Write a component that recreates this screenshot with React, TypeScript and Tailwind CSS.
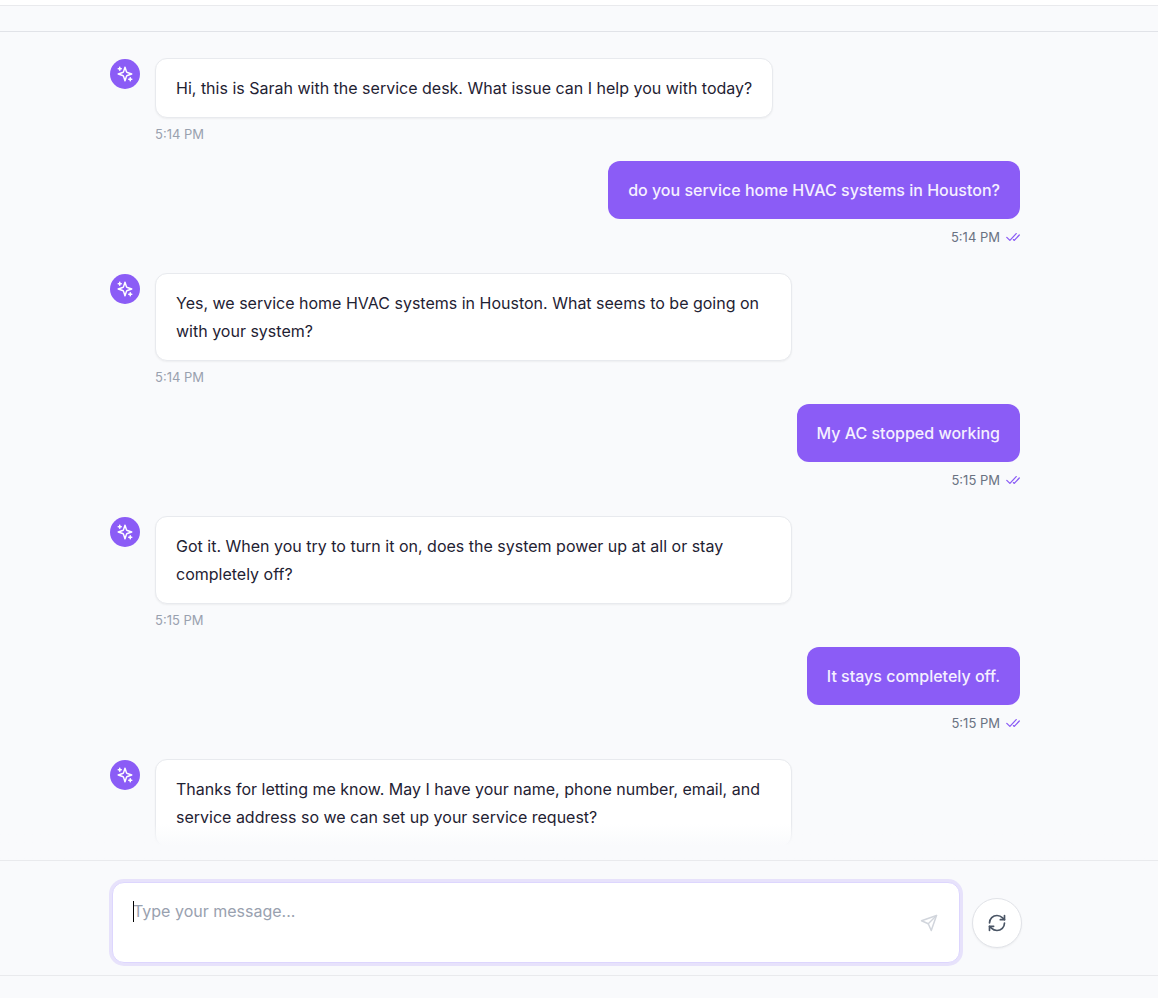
import { useState } from 'react';
import { RefreshCw } from 'lucide-react';
import clsx from 'clsx';

interface Message {
  id: number;
  from: 'agent' | 'user';
  text: string;
  time?: string;
}

const messages: Message[] = [
  { id: 1, from: 'agent', text: 'Hi, this is Sarah with the service desk. What issue can I help you with today?', time: '5:14 PM' },
  { id: 2, from: 'user', text: 'do you service home HVAC systems in Houston?', time: '5:14 PM' },
  { id: 3, from: 'agent', text: 'Yes, we service home HVAC systems in Houston. What seems to be going on with your system?', time: '5:14 PM' },
  { id: 4, from: 'user', text: 'My AC stopped working', time: '5:15 PM' },
  { id: 5, from: 'agent', text: 'Got it. When you try to turn it on, does the system power up at all or stay completely off?', time: '5:15 PM' },
  { id: 6, from: 'user', text: 'It stays completely off.', time: '5:15 PM' },
  { id: 7, from: 'agent', text: 'Thanks for letting me know. May I have your name, phone number, email, and service address so we can set up your service request?' },
];

function SparklesIcon() {
  return (
    <svg className="size-[18px]" viewBox="0 0 24 24" fill="none" stroke="currentColor" strokeWidth="2" strokeLinecap="round" strokeLinejoin="round" aria-hidden="true">
      <path d="m12 3-1.912 5.813a2 2 0 0 1-1.275 1.275L3 12l5.813 1.912a2 2 0 0 1 1.275 1.275L12 21l1.912-5.813a2 2 0 0 1 1.275-1.275L21 12l-5.813-1.912a2 2 0 0 1-1.275-1.275L12 3Z" />
      <path d="M5 3v4M3 5h4M19 17v4M17 19h4" />
    </svg>
  );
}

function ReadIcon() {
  return (
    <svg className="h-[10px] w-[14px] text-[#8b5cf6]" viewBox="0 0 14 10" fill="none" stroke="currentColor" strokeWidth="1.3" strokeLinecap="round" strokeLinejoin="round" aria-hidden="true">
      <path d="M.8 5.4 3.9 8.4 10.2 1.6" />
      <path d="M7.4 7.6 8.3 8.4 13.3 3" />
    </svg>
  );
}

function SendIcon() {
  return (
    <svg className="size-[18px]" viewBox="0 0 24 24" fill="none" stroke="currentColor" strokeWidth="2" strokeLinecap="round" strokeLinejoin="round" aria-hidden="true">
      <path d="m22 2-7 20-4-9-9-4Z" />
      <path d="M22 2 11 13" />
    </svg>
  );
}

function MessageRow({ message }: { message: Message }) {
  const { from, text, time } = message;

  if (from === 'user') {
    return (
      <div className="mb-[26px] flex flex-col items-end">
        <p className="rounded-xl bg-[#8b5cf6] px-5 py-[15px] text-base leading-7 font-medium text-[#f5f0ff]">
          {text}
        </p>
        <div className="mt-2 flex items-center gap-1.5 text-[13px] leading-5 text-gray-500">
          {time}
          <ReadIcon />
        </div>
      </div>
    );
  }

  return (
    <div className="mb-[17px] flex items-start gap-[15px]">
      <div className="mt-px flex size-[30px] shrink-0 items-center justify-center rounded-full bg-[#8b5cf6] text-white">
        <SparklesIcon />
      </div>
      <div className="max-w-[637px]">
        <p className="w-fit rounded-xl border border-[#e8eaee] bg-white px-5 py-[15px] text-base leading-7 text-[#1f2233] shadow-xs">
          {text}
        </p>
        {time && <div className="mt-1.5 text-[13px] leading-5 text-gray-400">{time}</div>}
      </div>
    </div>
  );
}

export default function App() {
  const [draft, setDraft] = useState('');

  return (
    <div className="flex h-screen flex-col overflow-hidden bg-[#f9fafc] font-['Inter',sans-serif]">
      <div className="h-1.5 shrink-0 border-b border-[#e9eaed] bg-white" />
      <div className="h-[26px] shrink-0 border-b border-[#e1e3e8]" />

      {/* Conversation */}
      <main className="relative min-h-0 flex-1 overflow-hidden pr-7">
        <div className="mx-auto max-w-[910px] pt-[26px]">
          {messages.map((message) => (
            <MessageRow key={message.id} message={message} />
          ))}
        </div>
        <div className="absolute inset-x-0 bottom-0 h-9 bg-linear-to-t from-[#f9fafc] from-40% to-transparent" />
      </main>

      {/* Composer */}
      <form
        className="shrink-0 border-t border-[#e9eaed] pt-[21px] pr-6 pb-3"
        onSubmit={(event) => event.preventDefault()}
      >
        <div className="mx-auto flex max-w-[910px] items-center gap-3">
          <div className="relative flex h-[81px] flex-1 items-center rounded-xl border border-[#ddd6fe] bg-white pr-[21px] pl-5 ring-3 ring-[#e7e2fb]">
            {!draft && <span className="absolute top-[18px] left-5 h-[21px] w-px bg-black" />}
            <textarea
              autoFocus
              aria-label="Message"
              placeholder="Type your message..."
              value={draft}
              onChange={(event) => setDraft(event.target.value)}
              className={clsx(
                'h-12 flex-1 resize-none text-base leading-6 text-[#1f2233] outline-none placeholder:text-gray-400',
                !draft && 'caret-transparent',
              )}
            />
            <button type="submit" aria-label="Send message" disabled={!draft} className={clsx(draft ? 'text-[#8b5cf6]' : 'text-gray-300')}>
              <SendIcon />
            </button>
          </div>
          <button
            type="button"
            aria-label="Restart conversation"
            onClick={() => setDraft('')}
            className="flex size-[50px] items-center justify-center rounded-full border border-[#e1e3e8] bg-white text-gray-600 shadow-xs"
          >
            <RefreshCw className="size-5" />
          </button>
        </div>
      </form>
      <div className="h-[23px] shrink-0 border-t border-[#e9eaed]" />
    </div>
  );
}
